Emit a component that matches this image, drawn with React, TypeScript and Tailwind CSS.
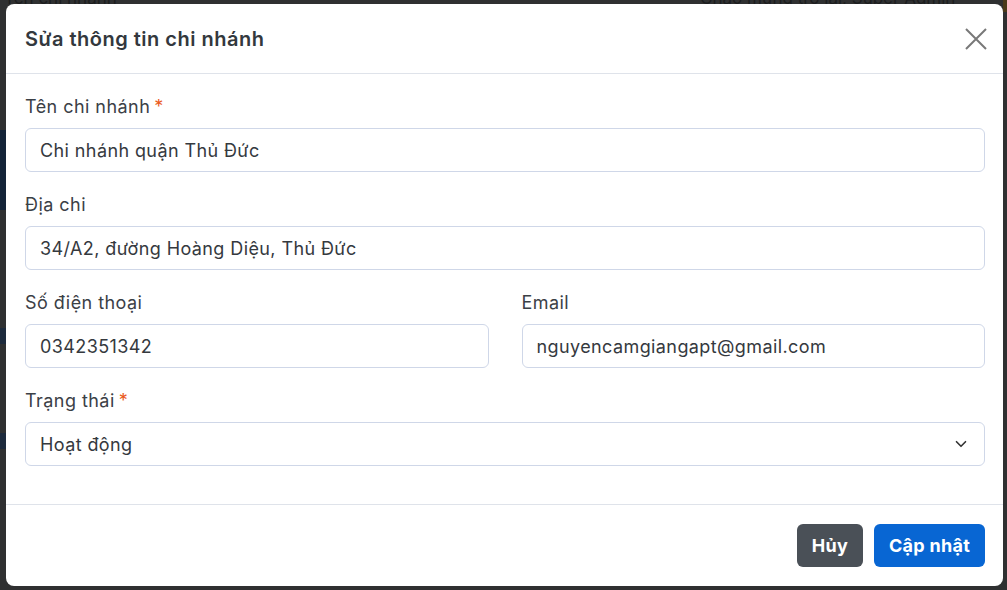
import { ChevronDown } from "lucide-react";

function Label({ text, required }: { text: string; required?: boolean }) {
  return (
    <label className="block text-[18px] tracking-[0.45px] leading-6 text-[#3b4046] mb-[9px]">
      {text}
      {required && <span className="text-[#ea5a1c] ml-1">*</span>}
    </label>
  );
}

function Field({ value }: { value: string }) {
  return (
    <div className="h-[44px] flex items-center px-[14px] rounded-[6px] border border-[#cfd7e8] text-[18px] tracking-[0.4px] text-[#35393e] bg-white">
      {value}
    </div>
  );
}

export default function App() {
  return (
    <div
      className="relative w-[1007px] h-[590px] overflow-hidden bg-[#2f3031]"
      style={{ fontFamily: "Inter, 'Noto Sans', sans-serif" }}
    >
      {/* faded page behind the backdrop */}
      <div className="absolute inset-0 pointer-events-none">
        <div className="absolute left-[4px] top-[-14px] text-[17px] text-[#1c1d1e]">Tên chi nhánh *</div>
        <div className="absolute left-[700px] top-[-14px] text-[17px] text-[#1c1d1e]">Chào mừng trở lại, Super Admin</div>
        <div className="absolute left-0 top-[130px] w-[6px] h-[80px] bg-[#142338]" />
        <div className="absolute left-0 top-[328px] w-[6px] h-[16px] bg-[#1d2a3c]" />
        <div className="absolute left-0 top-[433px] w-[6px] h-[16px] bg-[#1d2a3c]" />
        <div className="absolute right-0 top-[0px] w-[4px] h-[12px] bg-[#4a3a1a]" />
      </div>

      <div className="relative pt-[4px] pl-[6px] pr-[4px]">
        <div className="w-[997px] h-[582px] bg-white rounded-[8px] flex flex-col">
          {/* header */}
          <div className="h-[70px] flex items-center justify-between pl-[19px] pr-[16px] border-b border-[#dfe3ea]">
            <h2 className="text-[20px] font-semibold tracking-[0.5px] text-[#33383d] leading-none">
              Sửa thông tin chi nhánh
            </h2>
            <svg width="22" height="22" viewBox="0 0 22 22" className="mt-[1px]">
              <path d="M1 1L21 21M21 1L1 21" stroke="#787878" strokeWidth="2" fill="none" />
            </svg>
          </div>

          {/* body */}
          <div className="flex-1 pt-[21px] px-[19px] pr-[18px]">
            <Label text="Tên chi nhánh" required />
            <Field value="Chi nhánh quận Thủ Đức" />

            <div className="mt-[21px]">
              <Label text="Địa chi" />
              <Field value="34/A2, đường Hoàng Diệu, Thủ Đức" />
            </div>

            <div className="mt-[21px] grid grid-cols-2 gap-[33px]">
              <div>
                <Label text="Số điện thoại" />
                <Field value="0342351342" />
              </div>
              <div>
                <Label text="Email" />
                <Field value="nguyencamgiangapt@gmail.com" />
              </div>
            </div>

            <div className="mt-[21px]">
              <Label text="Trạng thái" required />
              <div className="h-[44px] flex items-center justify-between px-[14px] rounded-[6px] border border-[#cfd7e8] text-[18px] tracking-[0.4px] text-[#35393e]">
                <span>Hoạt động</span>
                <ChevronDown className="w-[18px] h-[18px] text-[#333]" strokeWidth={2.2} />
              </div>
            </div>
          </div>

          {/* footer */}
          <div className="h-[82px] border-t border-[#dfe3ea] flex items-center justify-end gap-[11px] pr-[18px] pb-[1px]">
            <button className="h-[43px] w-[66px] rounded-[6px] bg-[#4a5057] text-white text-[18px] tracking-[0.3px] font-bold">
              Hủy
            </button>
            <button className="h-[43px] w-[111px] rounded-[6px] bg-[#0866d3] text-white text-[18px] tracking-[0.3px] font-bold">
              Cập nhật
            </button>
          </div>
        </div>
      </div>
    </div>
  );
}
